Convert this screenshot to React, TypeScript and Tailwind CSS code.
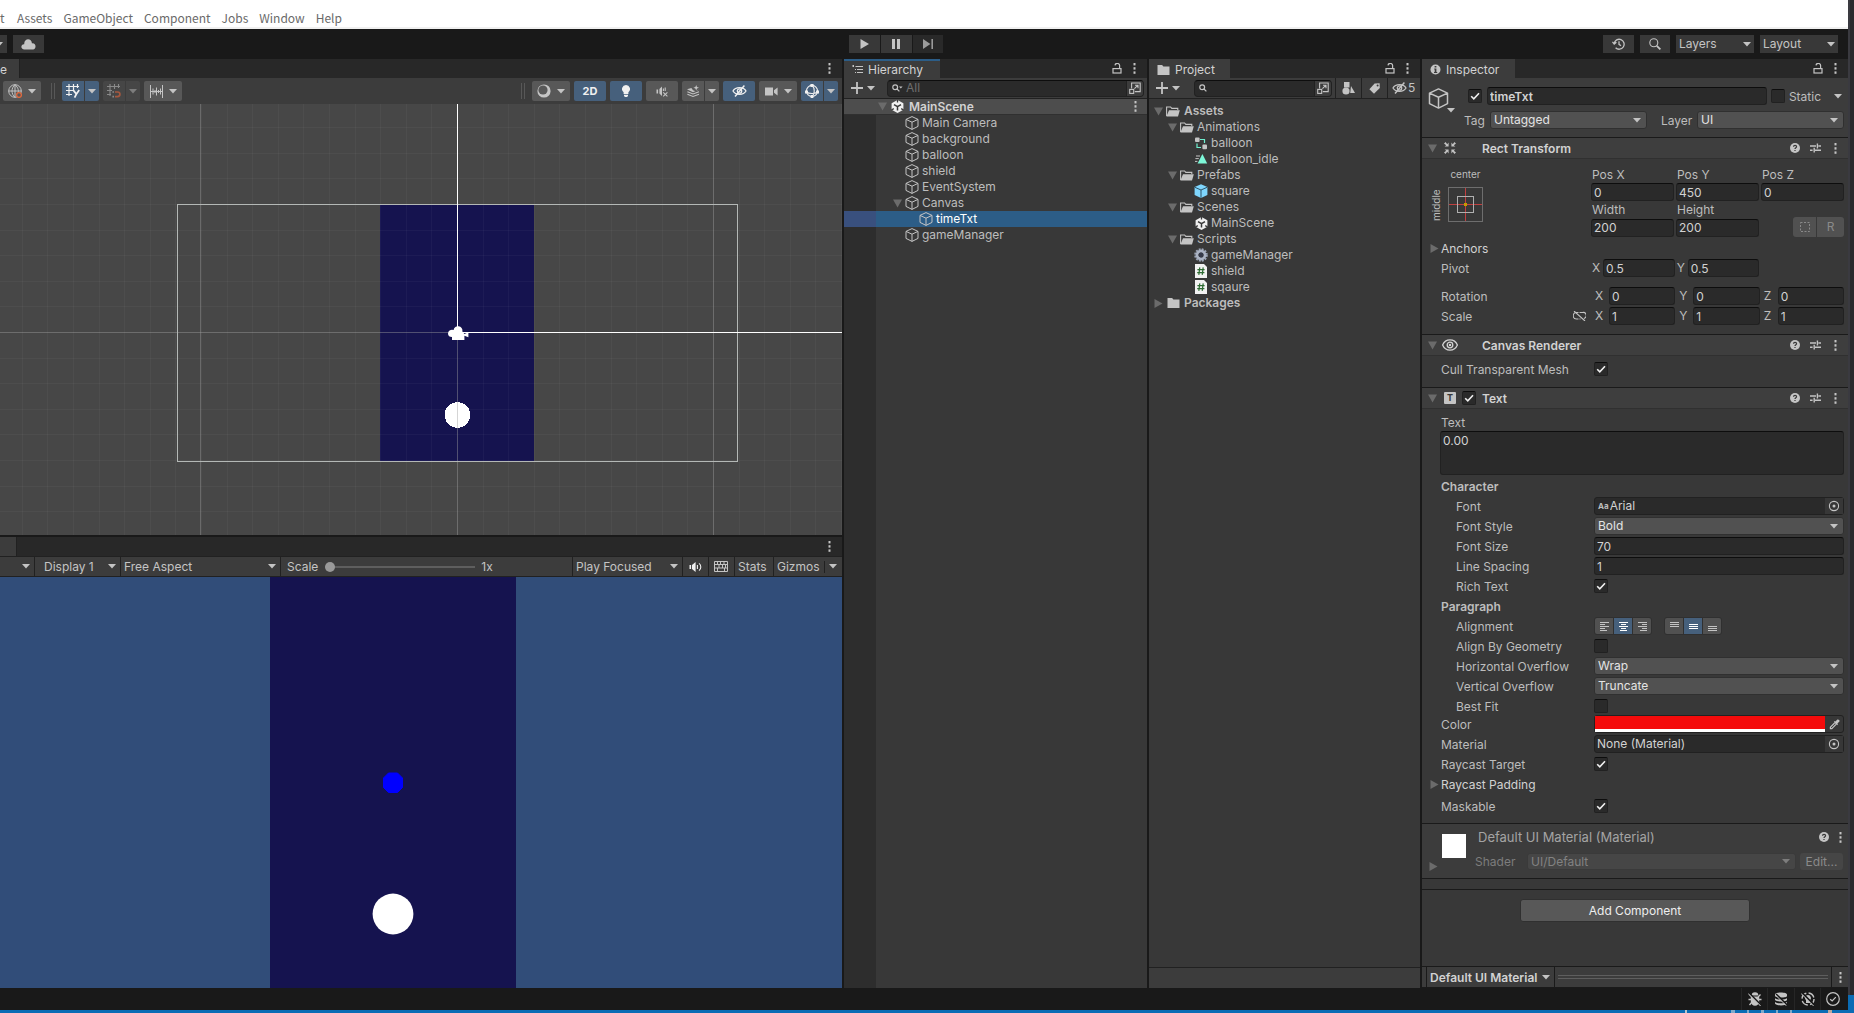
import { useId } from "react";
import type { ReactNode } from "react";

interface TreeItem {
  name: string;
  icon: ReactNode;
  depth: number;
  open?: boolean;
  closed?: boolean;
  bold?: boolean;
  selected?: boolean;
}

/* ── Small glyphs ── */

function Caret({ dim }: { dim?: boolean }) {
  return (
    <svg width="8" height="5" viewBox="0 0 8 5" className={dim ? "shrink-0 text-[#7d7d7d]" : "shrink-0 text-[#c4c4c4]"}>
      <path d="M0 0h8L4 4.6z" fill="currentColor" />
    </svg>
  );
}

function Foldout({ closed }: { closed?: boolean }) {
  return (
    <svg width="9" height="9" viewBox="0 0 9 9" className="shrink-0 text-[#6b6b6b]">
      <path d={closed ? "M0.5 0L8.5 4.5L0.5 9z" : "M0 0.5h9L4.5 8.5z"} fill="currentColor" />
    </svg>
  );
}

function Dots() {
  return (
    <svg width="3" height="11" viewBox="0 0 3 11" fill="#c4c4c4" className="shrink-0">
      <rect x="0.5" y="0" width="2" height="2.4" />
      <rect x="0.5" y="4.2" width="2" height="2.4" />
      <rect x="0.5" y="8.4" width="2" height="2.4" />
    </svg>
  );
}

function Lock() {
  return (
    <svg width="10" height="11" viewBox="0 0 10 11" fill="none" stroke="#c4c4c4" strokeWidth="1.2" className="shrink-0">
      <rect x="1" y="5.6" width="8" height="4.4" />
      <path d="M7.6 5.4V3a2.2 2.2 0 0 0-4.6-.6" />
    </svg>
  );
}

function Cube({ size = 14 }: { size?: number }) {
  return (
    <svg width={size} height={size} viewBox="0 0 14 14" fill="none" stroke="#c4c4c4" strokeLinejoin="round" className="shrink-0">
      <path d="M7 0.6L13 3.4V10.4L7 13.4L1 10.4V3.4z M1 3.4L7 6.2L13 3.4 M7 6.2V13.4" />
    </svg>
  );
}

function PrefabCube() {
  return (
    <svg width="14" height="14" viewBox="0 0 14 14" className="shrink-0">
      <path d="M7 0.2L13.4 3V11L7 13.9L0.6 11V3z" fill="#7fd6fd" />
      <path d="M0.9 3.3L7 6L13.1 3.3M7 6V13.8" fill="none" stroke="#2f5368" />
    </svg>
  );
}

function UnityMark() {
  return (
    <svg width="13" height="13" viewBox="0 0 13 13" className="shrink-0">
      <path d="M6.5 0L12.4 3.3V9.7L6.5 13L0.6 9.7V3.3z" fill="#f0f0f0" />
      <path d="M6.5 6.6V10.6M6.5 6.6L3 4.6M6.5 6.6L10 4.6" stroke="#383838" strokeWidth="1.5" />
      <path d="M6.5 0V2.6M0.4 10L2.8 8.6M12.6 10L10.2 8.6" stroke="#383838" strokeWidth="1.3" />
    </svg>
  );
}

function FolderOpen() {
  return (
    <svg width="14" height="11" viewBox="0 0 14 11" className="shrink-0">
      <path d="M0.6 10V1h4l1.2 1.4h6V4" fill="none" stroke="#c4c4c4" strokeWidth="1.1" />
      <path d="M3 4.2h10.8L12 10.6H0.4z" fill="#c4c4c4" />
    </svg>
  );
}

function Folder() {
  return (
    <svg width="13" height="10" viewBox="0 0 13 10" className="shrink-0">
      <path d="M0.5 0h4.6l1.3 1.6H12.5V10H0.5z" fill="#c4c4c4" />
    </svg>
  );
}

function AnimatorIcon() {
  return (
    <svg width="14" height="13" viewBox="0 0 14 13" className="shrink-0">
      <path d="M6 2.5h4.5V6M3 6.5V10.5h4" fill="none" stroke="#6ff0d0" strokeWidth="1.2" />
      <rect x="1" y="0.5" width="4.6" height="4.6" rx="1" fill="#c4c4c4" />
      <rect x="8.4" y="7.6" width="4.6" height="4.6" rx="1" fill="#c4c4c4" />
    </svg>
  );
}

function ClipIcon() {
  return (
    <svg width="14" height="10" viewBox="0 0 14 10" className="shrink-0">
      <path d="M8.4 0L13.2 9.4H3.6z" fill="#7df7d8" />
      <path d="M2 2h4M1.4 4.6h3.4M1 7.4h2.4" stroke="#c4c4c4" />
    </svg>
  );
}

function GearIcon() {
  return (
    <svg width="14" height="14" viewBox="0 0 14 14" className="shrink-0">
      <circle cx="7" cy="7" r="5.8" fill="none" stroke="#9aa3b4" strokeWidth="2" strokeDasharray="1.9 1.14" />
      <circle cx="7" cy="7" r="4" fill="none" stroke="#aab3c4" strokeWidth="2.8" />
      <circle cx="7" cy="7" r="2.4" fill="#353a4a" />
    </svg>
  );
}

function ScriptIcon() {
  return (
    <svg width="14" height="14" viewBox="0 0 14 14" className="shrink-0">
      <path d="M1 0h9l3 3v11H1z" fill="#f2f2f2" />
      <path d="M5.8 3.4L4.8 10.8M9.2 3.4L8.2 10.8M3.4 5.6h7.2M3.2 8.6h7.2" stroke="#2d6b32" strokeWidth="1.2" />
    </svg>
  );
}

function SearchGlyph({ menu }: { menu?: boolean }) {
  return (
    <svg width="11" height="8" viewBox="0 0 11 8" fill="none" stroke="#c4c4c4" strokeWidth="1.2" className="shrink-0">
      <circle cx="3.2" cy="3.2" r="2.4" />
      <path d="M5 5L7.4 7.4" />
      {menu && <path d="M7 2.4h3.6L8.8 4.4z" fill="#c4c4c4" stroke="none" />}
    </svg>
  );
}

function PopOut() {
  return (
    <svg width="12" height="12" viewBox="0 0 12 12" fill="none" stroke="#c4c4c4" strokeWidth="1.1" className="shrink-0">
      <path d="M2.6 6.4V1h8.6v8.6H5.8M5.4 6.6L8.8 3.4M6 3.2h3v3" />
      <rect x="0.7" y="7.4" width="4" height="4" />
    </svg>
  );
}

function HelpIcon() {
  return (
    <svg width="10" height="10" viewBox="0 0 10 10" className="shrink-0">
      <circle cx="5" cy="5" r="5" fill="#c4c4c4" />
      <path d="M3.5 3.8C3.5 2 6.6 2 6.6 3.8C6.6 4.8 5 4.8 5 6M5 7v1.1" fill="none" stroke="#383838" strokeWidth="1.2" />
    </svg>
  );
}

function PresetIcon() {
  return (
    <svg width="11" height="10" viewBox="0 0 11 10" stroke="#c4c4c4" strokeWidth="1.4" className="shrink-0">
      <path d="M0 3h6M8.4 3H11M7.4 0.6v4.8M0 7.2h2.6M5 7.2h6M4.2 4.8v4.8" />
    </svg>
  );
}

function EyeOff() {
  return (
    <svg width="15" height="12" viewBox="0 0 15 12" fill="none" stroke="currentColor" strokeWidth="1.3" className="shrink-0">
      <path d="M1 6C3.5 1.6 11.5 1.6 14 6C11.5 10.4 3.5 10.4 1 6z" />
      <circle cx="7.5" cy="6" r="2.2" />
      <path d="M12.4 0.6L3 11.4" strokeWidth="1.5" />
    </svg>
  );
}

function Target() {
  return (
    <svg width="12" height="12" viewBox="0 0 12 12" className="shrink-0">
      <circle cx="6" cy="6" r="4.6" fill="none" stroke="#c4c4c4" strokeWidth="1.1" />
      <circle cx="6" cy="6" r="1.5" fill="#c4c4c4" />
    </svg>
  );
}

/* ── Form controls ── */

const inputClass =
  "h-[18px] w-full min-w-0 rounded-[3px] border border-[#212121] border-t-[#0d0d0d] bg-[#2a2a2a] px-[2px] text-[#d2d2d2] outline-none";

function TextField({ label, value, bold }: { label: string; value: string; bold?: boolean }) {
  return <input aria-label={label} defaultValue={value} className={bold ? `${inputClass} font-semibold` : inputClass} />;
}

function Check({ id, label, checked }: { id?: string; label?: string; checked?: boolean }) {
  return (
    <span className="relative flex size-[14px] shrink-0">
      <input
        id={id}
        type="checkbox"
        aria-label={label}
        defaultChecked={checked}
        className="peer size-[14px] appearance-none rounded-[2px] border border-[#212121] border-t-[#0d0d0d] bg-[#2a2a2a]"
      />
      <svg
        viewBox="0 0 14 14"
        className="pointer-events-none absolute inset-0 hidden size-[14px] peer-checked:block"
        fill="none"
        stroke="#f0f0f0"
        strokeWidth="1.6"
      >
        <path d="M3.2 7.2L5.8 9.8L11 4.2" />
      </svg>
    </span>
  );
}

function Dropdown({ id, label, value, disabled }: { id?: string; label?: string; value: string; disabled?: boolean }) {
  return (
    <span className="relative flex w-full min-w-0 items-center">
      <select
        id={id}
        aria-label={label}
        disabled={disabled}
        className={
          disabled
            ? "h-[17px] w-full appearance-none rounded-[3px] border border-[#3a3a3a] bg-[#464646] px-[3px] leading-[14px] text-[#828282] opacity-100"
            : "h-[18px] w-full appearance-none rounded-[3px] border border-[#303030] bg-[#515151] px-[3px] leading-[14px] text-[#e4e4e4]"
        }
      >
        <option>{value}</option>
      </select>
      <span className="pointer-events-none absolute right-[6px]">
        <Caret dim={disabled} />
      </span>
    </span>
  );
}

function Row({
  label,
  indent,
  className = "h-5",
  children,
}: {
  label: string;
  indent?: boolean;
  className?: string;
  children: (id: string) => ReactNode;
}) {
  const id = useId();
  return (
    <div className={`grid grid-cols-[153px_1fr] items-center pr-1 pl-[19px] ${className}`}>
      <label htmlFor={id} className={indent ? "pt-[2px] pl-[15px]" : "pt-[2px]"}>
        {label}
      </label>
      <div className="flex min-w-0 items-center">{children(id)}</div>
    </div>
  );
}

/* ── Panel chrome ── */

function TabBar({ title, icon, active, width }: { title: string; icon: ReactNode; active?: boolean; width: string }) {
  return (
    <div className="flex h-[19px] shrink-0 justify-between bg-[#282828]">
      <div className={`flex items-center gap-[5px] border-t-2 bg-[#3c3c3c] pl-2 ${active ? "border-[#2c5d87]" : "border-[#3c3c3c]"} ${width}`}>
        {icon}
        <span className="text-[#d2d2d2]">{title}</span>
      </div>
      <div className="flex items-center gap-[11px] pr-[11px]">
        <button aria-label="Lock"><Lock /></button>
        <button aria-label={`${title} menu`}><Dots /></button>
      </div>
    </div>
  );
}

function SearchBox({ placeholder, menu }: { placeholder?: string; menu?: boolean }) {
  return (
    <div className="flex h-[17px] min-w-0 flex-1 items-center overflow-hidden rounded-[4px] border border-[#212121] border-t-[#0d0d0d] bg-[#2a2a2a] pl-1">
      <SearchGlyph menu={menu} />
      <input
        aria-label="Search"
        placeholder={placeholder}
        className="ml-[3px] h-[15px] min-w-0 flex-1 bg-transparent text-[#d2d2d2] outline-none placeholder:text-[#6e6e6e]"
      />
      <button aria-label="Open search" className="flex h-[15px] w-[17px] items-center justify-center border-l border-[#212121] bg-[#3c3c3c]">
        <PopOut />
      </button>
    </div>
  );
}

function AddMenu() {
  return (
    <button aria-label="Add" className="flex items-center gap-1">
      <svg width="12" height="12" viewBox="0 0 12 12" stroke="#c4c4c4" strokeWidth="1.8">
        <path d="M6 0v12M0 6h12" />
      </svg>
      <Caret />
    </button>
  );
}

/* ── Top bars ── */

const menus = ["Assets", "GameObject", "Component", "Jobs", "Window", "Help"];

function MenuBar() {
  return (
    <nav className="flex h-[29px] shrink-0 items-center gap-[11px] border-b-2 border-[#f0f0f0] bg-white pt-[9px] font-['Noto_Sans_CJK_KR','Open_Sans',sans-serif] text-[12px] leading-[16px] text-[#6a6a6a]">
      <button className="w-[6px] text-left">t</button>
      {menus.map((m) => (
        <button key={m}>{m}</button>
      ))}
    </nav>
  );
}

function MainToolbar() {
  return (
    <div className="grid h-[30px] shrink-0 grid-cols-[1fr_94px_905px] items-center bg-[#191919]">
      <div className="flex gap-[6px]">
        <button aria-label="Account" className="flex h-[18px] w-[7px] items-center justify-end overflow-hidden bg-[#383838] pr-1">
          <Caret />
        </button>
        <button aria-label="Cloud" className="flex h-[18px] w-[31px] items-center justify-center bg-[#383838]">
          <svg width="15" height="11" viewBox="0 0 15 11">
            <path d="M3.4 10.6C-0.8 10.4-0.4 5 3.2 5.2C3 -0.8 10.4-1.4 11 4.4C15.4 3.8 15.6 10.2 12 10.6z" fill="#c4c4c4" />
          </svg>
        </button>
      </div>
      <div className="flex gap-px">
        <button aria-label="Play" className="flex h-[18px] w-[31px] items-center justify-center bg-[#383838]">
          <svg width="9" height="10" viewBox="0 0 9 10"><path d="M0.5 0L9 5L0.5 10z" fill="#c4c4c4" /></svg>
        </button>
        <button aria-label="Pause" className="flex h-[18px] w-[31px] items-center justify-center bg-[#383838]">
          <svg width="9" height="10" viewBox="0 0 9 10"><path d="M0 0h3v10H0zM5 0h3v10H5z" fill="#c4c4c4" /></svg>
        </button>
        <button aria-label="Step" className="flex h-[18px] w-[30px] items-center justify-center bg-[#292929]">
          <svg width="10" height="10" viewBox="0 0 10 10"><path d="M0 0L7.4 5L0 10zM8.4 0H10v10H8.4z" fill="#9a9a9a" /></svg>
        </button>
      </div>
      <div className="flex justify-end gap-[6px] pr-[10px]">
        <button aria-label="History" className="flex h-[18px] w-[31px] items-center justify-center bg-[#383838]">
          <svg width="13" height="12" viewBox="0 0 13 12" fill="none" stroke="#c4c4c4" strokeWidth="1.3">
            <path d="M2.2 5.4A5 5 0 1 1 3.6 9.8M0.4 3.8L2.2 6L4.4 4.2M7 3.2V6.4L9 7.8" />
          </svg>
        </button>
        <button aria-label="Find" className="flex h-[18px] w-[30px] items-center justify-center bg-[#383838]">
          <svg width="12" height="12" viewBox="0 0 12 12" fill="none" stroke="#c4c4c4">
            <circle cx="4.8" cy="4.8" r="4" strokeWidth="1.1" />
            <path d="M7.8 7.8L11.4 11.4" strokeWidth="1.8" />
          </svg>
        </button>
        {["Layers", "Layout"].map((name) => (
          <button key={name} className="flex h-[18px] w-[78px] items-center justify-between bg-[#383838] px-[3px] text-[#c4c4c4]">
            {name}
            <Caret />
          </button>
        ))}
      </div>
    </div>
  );
}

/* ── Scene view ── */

function Grip() {
  return <span className="h-4 w-1 border-x border-[#585858]" />;
}

const toolTones = {
  normal: "bg-[#585858] text-[#c4c4c4]",
  active: "bg-[#46607c] text-[#f0f0f0]",
  off: "bg-[#464646] text-[#8a8a8a]",
};

function Tool({ label, tone = "normal", width = "w-8", caret, children }: { label: string; tone?: keyof typeof toolTones; width?: string; caret?: boolean; children: ReactNode }) {
  return (
    <button aria-label={label} className={`flex h-5 items-center justify-center rounded-[2px] ${caret ? "gap-[6px]" : ""} ${toolTones[tone]} ${width}`}>
      {children}
      {caret && <Caret />}
    </button>
  );
}

function SplitTool({ label, tone = "normal", children }: { label: string; tone?: keyof typeof toolTones; children: ReactNode }) {
  return (
    <div className="flex gap-px">
      <button aria-label={label} className={`flex h-5 w-[22px] items-center justify-center rounded-l-[2px] ${toolTones[tone]}`}>
        {children}
      </button>
      <button aria-label={`${label} options`} className={`flex h-5 w-[14px] items-center justify-center rounded-r-[2px] ${toolTones[tone]}`}>
        <Caret dim={tone === "off"} />
      </button>
    </div>
  );
}

function SceneToolbar() {
  return (
    <div className="flex h-[26px] shrink-0 items-center justify-between bg-[#3c3c3c] pr-1 pl-[3px]">
      <div className="flex items-center gap-1">
        <Tool label="Pivot orientation" width="w-[38px]" caret>
          <svg width="14" height="14" viewBox="0 0 14 14" fill="none" stroke="#c4c4c4">
            <circle cx="7" cy="7" r="6.3" />
            <path d="M0.7 7h12.6M7 0.7v12.6M7 0.7C3 4 3 10 7 13.3M7 0.7C10.6 4 10.8 7 10 9" />
            <circle cx="11" cy="11" r="2.4" fill="#585858" stroke="#e2683c" strokeWidth="1.3" />
          </svg>
        </Tool>
        <span className="mr-[3px] ml-[6px] flex"><Grip /></span>
        <SplitTool label="Grid axis" tone="active">
          <svg width="14" height="14" viewBox="0 0 14 14" fill="none" stroke="currentColor" strokeWidth="1.2">
            <path d="M3 0v12M7.5 0v7M11.5 0v4M0 2.5h13M0 6.5h7M0 10.5h6" />
            <path d="M7.6 6.6L10.4 10L13.2 6M10.4 10L8.6 13.6" strokeWidth="1.7" />
          </svg>
        </SplitTool>
        <SplitTool label="Grid snapping" tone="off">
          <svg width="14" height="14" viewBox="0 0 14 14" fill="none" stroke="currentColor" strokeWidth="1.1">
            <path d="M3 0v12M7.5 0v5M11.5 0v4M0 2.5h13M0 6.5h5M0 10.5h4" />
            <path d="M8 8h2.6a2.2 2.2 0 0 1 0 4.6H8" stroke="#a6583f" strokeWidth="1.7" />
            <path d="M5.4 8H7M5.4 12.6H7" strokeWidth="1.7" />
          </svg>
        </SplitTool>
        <Tool label="Snap increment" width="w-[38px]" caret>
          <svg width="13" height="13" viewBox="0 0 13 13" fill="none" stroke="currentColor">
            <path d="M0.5 0v13M12.5 0v13M3 3.5v6M5 5v3M6.5 2.5v8M8.5 5v3M10.5 3.5v6M1 6.5h11" />
          </svg>
        </Tool>
      </div>
      <div className="flex items-center gap-1">
        <span className="mr-[3px] flex"><Grip /></span>
        <Tool label="Draw mode" width="w-[38px]" caret>
          <svg width="14" height="14" viewBox="0 0 14 14">
            <circle cx="7" cy="7" r="6.6" fill="#c4c4c4" />
            <circle cx="6" cy="6" r="4.6" fill="#585858" />
          </svg>
        </Tool>
        <Tool label="2D" tone="active"><span className="text-[11px] font-bold">2D</span></Tool>
        <Tool label="Lighting" tone="active">
          <svg width="8" height="12" viewBox="0 0 8 12" fill="currentColor">
            <path d="M4 0a4 4 0 0 1 2.4 7.2V9H1.6V7.2A4 4 0 0 1 4 0zM2 9.8h4V11L5 12H3L2 11z" />
          </svg>
        </Tool>
        <Tool label="Audio">
          <svg width="12" height="11" viewBox="0 0 12 11" fill="none" stroke="currentColor" strokeWidth="1.1">
            <path d="M0.5 3.4h1.6v4H0.5z M3.4 3L6 0.6V10L3.4 7.6z" fill="currentColor" stroke="none" />
            <path d="M7.4 2.4V5M9.2 1.6V5M7.2 6.4l4.2 4M11.4 6.4l-4.2 4" />
          </svg>
        </Tool>
        <SplitTool label="Effects">
          <svg width="13" height="12" viewBox="0 0 13 12" fill="currentColor">
            <path d="M0 4.2L4.4 3l1.6 2.2L8 6l2.6-.4L12 4.6 6 7.2z" />
            <path d="M0.4 6.8L6 9l6-2.2M0.4 9.2L6 11.4l6-2.2" fill="none" stroke="currentColor" strokeWidth="1.1" />
            <path d="M9.2 0l.8 1.9 2 .8-2 .8-.8 1.9-.8-1.9-2-.8 2-.8z" />
          </svg>
        </SplitTool>
        <Tool label="Scene visibility" tone="active"><EyeOff /></Tool>
        <Tool label="Camera" width="w-[38px]" caret>
          <svg width="13" height="9" viewBox="0 0 13 9" fill="currentColor">
            <path d="M0 0.5h8v8H0zM9 3.2L12.6 0.4V8.6L9 5.8z" />
          </svg>
        </Tool>
        <SplitTool label="Gizmos" tone="active">
          <svg width="14" height="14" viewBox="0 0 14 14" fill="none" stroke="currentColor" strokeWidth="1.1">
            <circle cx="7" cy="7" r="5.6" />
            <path d="M7 1.4C10 4 10 10 7 12.6M1.4 8C4 10 10 10 12.6 8" />
            <path d="M5.400 0h3.200v3H5.400zM0 6.600h3v3H0zM11 6.600h3v3h-3zM5.600 11h2.800v3H5.600z" fill="currentColor" stroke="none" />
          </svg>
        </SplitTool>
      </div>
    </div>
  );
}

const gridX = Array.from({ length: 34 }, (_, i) => Math.floor(457.5 + (i - 18) * 25.6));
const gridY = Array.from({ length: 17 }, (_, i) => Math.floor(228.5 + (i - 8) * 25.6));

function SceneCanvas() {
  return (
    <svg viewBox="0 0 842 431" preserveAspectRatio="xMidYMid slice" className="block h-full w-full bg-[#474747]" shapeRendering="crispEdges">
      <rect x="380" y="100" width="154" height="257" fill="#15134f" />
      <g fill="#ffffff" fillOpacity="0.035">
        {gridX.map((x) => <rect key={x} x={x} y="0" width="1" height="431" />)}
        {gridY.map((y) => <rect key={y} x="0" y={y} width="842" height="1" />)}
      </g>
      <circle cx="457.5" cy="311" r="12.8" fill="#ffffff" />
      <g fill="#9a9a9a" fillOpacity="0.42">
        <rect x="200" y="0" width="1" height="431" />
        <rect x="713" y="0" width="1" height="431" />
        <rect x="457" y="228" width="1" height="203" />
        <rect x="0" y="228" width="457" height="1" />
      </g>
      <rect x="177.5" y="100.5" width="560" height="257" fill="none" stroke="#b4b8b6" />
      <rect x="457" y="0" width="1" height="228" fill="#ffffff" />
      <rect x="457" y="228" width="385" height="1" fill="#ffffff" />
      <g shapeRendering="auto">
        <path d="M453 228.6l3-3 6 1-2 4z" fill="#0000ff" />
        <path d="M448 229.4a4 4 0 0 1 5.6-3.4A4.3 4.3 0 1 1 462.4 227.4L464.4 230l4-1.8v5l-4-1.4V236H452v-3C449.6 233 448 231.6 448 229.4z" fill="#ffffff" />
      </g>
    </svg>
  );
}

/* ── Game view ── */

function GameToolbar() {
  return (
    <div className="flex h-[21px] shrink-0 items-stretch border-y border-[#212121] bg-[#3c3c3c] text-[#c4c4c4]">
      <button aria-label="View" className="flex w-[34px] items-center justify-end pr-1"><Caret /></button>
      <button className="flex w-[86px] items-center justify-between border-l border-[#212121] pr-1 pl-[9px]">Display 1<Caret /></button>
      <button className="flex w-[160px] items-center justify-between border-l border-[#212121] pr-1 pl-[3px]">Free Aspect<Caret /></button>
      <label className="flex flex-1 items-center border-l border-[#212121] pl-[6px]">
        Scale
        <input
          type="range"
          defaultValue={0}
          className="mr-[6px] ml-[7px] h-[2px] w-[150px] appearance-none bg-[#5e5e5e] [&::-webkit-slider-thumb]:size-[10px] [&::-webkit-slider-thumb]:appearance-none [&::-webkit-slider-thumb]:rounded-full [&::-webkit-slider-thumb]:bg-[#999999]"
        />
        1x
      </label>
      <button className="flex w-[110px] items-center justify-between border-l border-[#212121] pr-1 pl-[3px]">Play Focused<Caret /></button>
      <button aria-label="Mute audio" className="flex w-[26px] items-center justify-center border-l border-[#212121]">
        <svg width="13" height="10" viewBox="0 0 13 10" fill="none" stroke="#f0f0f0" strokeWidth="1.1">
          <path d="M0.5 3h1.6v4H0.5z M3 3L6.6 0V10L3 7z" fill="#f0f0f0" stroke="none" />
          <path d="M8.4 3v4M10 1.4C12.4 3 12.4 7 10 8.6" />
        </svg>
      </button>
      <button aria-label="Shortcuts" className="flex w-[26px] items-center border-l border-[#212121] pl-[5px]">
        <svg width="14" height="11" viewBox="0 0 14 11" fill="none" stroke="#c4c4c4">
          <path d="M0.5 0.5h13v10H0.5zM0.5 3.5h13M0.5 7h13M3.5 0.5v3M6.5 0.5v3M10 0.5v3M5 3.5v3.5M8.5 3.5v3.5M11.5 3.5v3.5M3.5 7v3.5M10.5 7v3.5" />
        </svg>
      </button>
      <button className="flex w-[39px] items-center border-l border-[#212121] pl-[3px]">Stats</button>
      <button className="flex w-[51px] items-center border-l border-[#212121] pl-[3px]">Gizmos</button>
      <button aria-label="Gizmos options" className="flex w-[18px] items-center justify-between pr-[5px]">
        <span className="h-3 w-px bg-[#212121]" />
        <Caret />
      </button>
    </div>
  );
}

function GameCanvas() {
  return (
    <svg viewBox="0 0 842 411" preserveAspectRatio="xMidYMid slice" className="block h-full w-full bg-[#314d79]">
      <rect x="270" y="0" width="246" height="411" fill="#15134f" />
      <path d="M388.5 196h9l5 5v9.5l-5 5h-9l-5-5V201z" fill="#0000ff" stroke="#0000ff" strokeLinejoin="round" />
      <circle cx="393" cy="337" r="20.4" fill="#ffffff" />
    </svg>
  );
}

/* ── Hierarchy ── */

const hierarchy: TreeItem[] = [
  { name: "Main Camera", icon: <Cube />, depth: 1 },
  { name: "background", icon: <Cube />, depth: 1 },
  { name: "balloon", icon: <Cube />, depth: 1 },
  { name: "shield", icon: <Cube />, depth: 1 },
  { name: "EventSystem", icon: <Cube />, depth: 1 },
  { name: "Canvas", icon: <Cube />, depth: 1, open: true },
  { name: "timeTxt", icon: <Cube />, depth: 2, selected: true },
  { name: "gameManager", icon: <Cube />, depth: 1 },
];

const indents = ["pl-[5px]", "pl-[19px]", "pl-[33px]"];

function TreeRow({ item }: { item: TreeItem }) {
  return (
    <div className={`flex h-4 items-center gap-[3px] ${indents[item.depth]}`}>
      <span className="flex w-[9px] justify-center">
        {(item.open || item.closed) && <Foldout closed={item.closed} />}
      </span>
      <span className="flex w-[14px] justify-center">{item.icon}</span>
      <span className={item.bold ? "pl-px font-semibold" : ""}>{item.name}</span>
    </div>
  );
}

function Hierarchy() {
  return (
    <section className="flex w-[303px] shrink-0 flex-col bg-[#383838]">
      <TabBar
        title="Hierarchy"
        active
        width="w-24"
        icon={
          <svg width="11" height="9" viewBox="0 0 11 9" stroke="#c4c4c4" className="shrink-0">
            <path d="M0 1h2M3.5 1.5H11M3 4.5h1M5 4.5h6M3 7.5h1M5 7.5h6M1.5 0v2" />
          </svg>
        }
      />
      <div className="flex h-[21px] shrink-0 items-center gap-3 border-b border-[#212121] bg-[#3c3c3c] pr-[3px] pl-[7px]">
        <AddMenu />
        <SearchBox placeholder="All" menu />
      </div>
      <div className="flex h-4 items-center gap-1 border-b border-[#303030] bg-[#4d4d4d] pr-[10px] pl-[34px]">
        <Foldout />
        <UnityMark />
        <span className="flex-1 pl-px font-semibold text-[#d2d2d2]">MainScene</span>
        <Dots />
      </div>
      <div className="flex flex-1 flex-col">
        {hierarchy.map((item) => (
          <div key={item.name} className={item.selected ? "flex bg-[#2c5d87] text-white" : "flex"}>
            <span className={item.selected ? "w-[30px] bg-[#39507e]" : "w-[30px] bg-[#2d2d2d]"} />
            <span className={item.selected ? "w-[2px] bg-[#39507e]" : "w-[2px] bg-[#2d2d2d]"} />
            <div className="-ml-[2px]">
              <TreeRow item={item} />
            </div>
          </div>
        ))}
        <span className="w-8 flex-1 bg-[#2d2d2d]" />
      </div>
    </section>
  );
}

/* ── Project ── */

const project: TreeItem[] = [
  { name: "Assets", icon: <FolderOpen />, depth: 0, open: true, bold: true },
  { name: "Animations", icon: <FolderOpen />, depth: 1, open: true },
  { name: "balloon", icon: <AnimatorIcon />, depth: 2 },
  { name: "balloon_idle", icon: <ClipIcon />, depth: 2 },
  { name: "Prefabs", icon: <FolderOpen />, depth: 1, open: true },
  { name: "square", icon: <PrefabCube />, depth: 2 },
  { name: "Scenes", icon: <FolderOpen />, depth: 1, open: true },
  { name: "MainScene", icon: <UnityMark />, depth: 2 },
  { name: "Scripts", icon: <FolderOpen />, depth: 1, open: true },
  { name: "gameManager", icon: <GearIcon />, depth: 2 },
  { name: "shield", icon: <ScriptIcon />, depth: 2 },
  { name: "sqaure", icon: <ScriptIcon />, depth: 2 },
  { name: "Packages", icon: <Folder />, depth: 0, closed: true, bold: true },
];

function Project() {
  return (
    <section className="flex w-[271px] shrink-0 flex-col bg-[#383838]">
      <TabBar title="Project" width="w-[81px]" icon={<Folder />} />
      <div className="flex h-[21px] shrink-0 items-center border-b border-[#212121] bg-[#3c3c3c] pl-[7px]">
        <AddMenu />
        <div className="mr-[3px] ml-[14px] flex min-w-0 flex-1">
          <SearchBox />
        </div>
        <button aria-label="Filter by type" className="flex h-full w-[26px] items-center justify-center border-l border-[#212121]">
          <svg width="13" height="13" viewBox="0 0 13 13" fill="#c4c4c4">
            <rect x="2" y="0" width="5.5" height="5.5" />
            <circle cx="4" cy="9" r="3.6" />
            <path d="M9 4l4 7H8.2z" />
          </svg>
        </button>
        <button aria-label="Filter by label" className="flex h-full w-[26px] items-center justify-center border-l border-[#212121]">
          <svg width="11" height="11" viewBox="0 0 11 11">
            <path d="M5.6 0.6L10.6 0.2L10.8 5L5 10.8L0.4 6.2z" fill="#c4c4c4" />
            <circle cx="8.6" cy="2.6" r="1" fill="#3c3c3c" />
          </svg>
        </button>
        <button className="flex h-full w-[33px] items-center gap-px border-l border-[#212121] pl-1 text-[#c4c4c4]">
          <EyeOff />5
        </button>
      </div>
      <div className="flex flex-1 flex-col pt-1">
        {project.map((item, i) => (
          <TreeRow key={i} item={item} />
        ))}
      </div>
      <div className="h-[21px] border-t border-[#212121] bg-[#3c3c3c]" />
    </section>
  );
}

/* ── Inspector ── */

function ComponentHeader({ title, icon, toggle }: { title: string; icon: ReactNode; toggle?: boolean }) {
  return (
    <div className="flex h-[22px] items-center border-t border-b border-t-[#1a1a1a] border-b-[#303030] bg-[#3e3e3e] pr-[11px] pl-[6px]">
      <Foldout />
      <span className="ml-[5px] flex w-4 justify-center">{icon}</span>
      <span className="flex w-6 pl-1">{toggle && <Check label={`${title} enabled`} checked />}</span>
      <h2 className="flex-1 pt-[2px] font-semibold text-[#d2d2d2]">{title}</h2>
      <div className="flex items-center gap-[10px]">
        <HelpIcon />
        <PresetIcon />
        <span className="ml-[3px]"><Dots /></span>
      </div>
    </div>
  );
}

function Axis({ name, of, value, width }: { name: string; of: string; value: string; width: string }) {
  return (
    <label className="flex items-center">
      <span className={`shrink-0 ${width}`}>{name}</span>
      <TextField label={`${of} ${name}`} value={value} />
    </label>
  );
}

function ObjectHeader() {
  return (
    <div className="flex h-[59px] shrink-0 bg-[#3c3c3c] pr-1 pl-[6px]">
      <button aria-label="Icon" className="flex h-[35px] w-7 items-end pt-[10px]">
        <span className="-mr-[2px] pb-1"><Cube size={21} /></span>
        <Caret />
      </button>
      <div className="flex flex-1 flex-col gap-[6px] pt-[9px]">
        <div className="flex items-center pl-3">
          <Check label="Active" checked />
          <div className="mr-1 ml-[5px] flex flex-1"><TextField label="Name" value="timeTxt" bold /></div>
          <label className="flex items-center gap-1">
            <Check />
            <span className="pt-[2px]">Static</span>
          </label>
          <span className="mr-[2px] ml-[13px]"><Caret /></span>
        </div>
        <div className="flex items-center">
          <label htmlFor="tag" className="w-[34px] pt-[2px] pl-2">Tag</label>
          <div className="flex flex-157"><Dropdown id="tag" value="Untagged" /></div>
          <label htmlFor="layer" className="w-[50px] pt-[2px] pl-[14px]">Layer</label>
          <div className="flex flex-147"><Dropdown id="layer" value="UI" /></div>
        </div>
      </div>
    </div>
  );
}

const posFields = [
  { name: "Pos X", value: "0" },
  { name: "Pos Y", value: "450" },
  { name: "Pos Z", value: "0" },
];

const sizeFields = [
  { name: "Width", value: "200" },
  { name: "Height", value: "200" },
];

function RectTransform() {
  return (
    <div className="pb-2">
      <div className="flex pt-2 pr-1 pb-px">
        <div className="flex w-[169px] pl-2">
          <span className="mt-5 h-9 rotate-180 text-center text-[10px] leading-[12px] [writing-mode:vertical-rl]">middle</span>
          <div className="ml-1 flex w-[38px] flex-col items-center pl-px">
            <span className="h-5 text-[10px] leading-[14px]">center</span>
            <svg width="35" height="35" viewBox="0 0 35 35" fill="none" shapeRendering="crispEdges">
              <path d="M17.5 1v33M1 17.5h33" stroke="#c04040" />
              <rect x="0.5" y="0.5" width="34" height="34" stroke="#6e6e6e" />
              <rect x="9.5" y="9.5" width="16" height="16" stroke="#b0b0b0" />
              <rect x="16" y="16" width="3" height="3" fill="#c49a00" />
            </svg>
          </div>
        </div>
        <div className="grid flex-1 grid-cols-3 gap-x-[2px]">
          {posFields.map((f) => (
            <label key={f.name} className="flex flex-col leading-[16px]">
              <span className="pl-px">{f.name}</span>
              <TextField label={f.name} value={f.value} />
            </label>
          ))}
          {sizeFields.map((f) => (
            <label key={f.name} className="flex flex-col leading-[18px]">
              <span className="pl-px">{f.name}</span>
              <TextField label={f.name} value={f.value} />
            </label>
          ))}
          <div className="flex items-end justify-end gap-px text-[#8a8a8a]">
            <button aria-label="Blueprint mode" className="flex h-5 w-[23px] items-center justify-center rounded-l-[3px] bg-[#515151]">
              <svg width="10" height="10" viewBox="0 0 10 10"><rect x="0.5" y="0.5" width="9" height="9" fill="none" stroke="#8a8a8a" strokeDasharray="2 1.5" /></svg>
            </button>
            <button aria-label="Raw edit mode" className="h-5 w-[27px] rounded-r-[3px] bg-[#515151]">R</button>
          </div>
        </div>
      </div>
      <div className="flex h-5 items-center gap-[2px] pl-2 text-[#d2d2d2]">
        <Foldout closed />
        <span className="pt-[2px]">Anchors</span>
      </div>
      <div className="mb-2 grid h-5 grid-cols-[150px_1fr] items-center pr-1 pl-[19px]">
        <span className="pt-[2px]">Pivot</span>
        <div className="grid grid-cols-3 gap-x-[2px] pl-px">
          <Axis of="Pivot" name="X" value="0.5" width="w-[11px]" />
          <Axis of="Pivot" name="Y" value="0.5" width="w-[11px]" />
        </div>
      </div>
      <div className="grid h-5 grid-cols-[150px_1fr] items-center pr-1 pl-[19px]">
        <span className="pt-[2px]">Rotation</span>
        <div className="grid grid-cols-3 gap-x-1 pl-1">
          <Axis of="Rotation" name="X" value="0" width="w-[14px]" />
          <Axis of="Rotation" name="Y" value="0" width="w-[14px]" />
          <Axis of="Rotation" name="Z" value="0" width="w-[14px]" />
        </div>
      </div>
      <div className="grid h-5 grid-cols-[150px_1fr] items-center pr-1 pl-[19px]">
        <span className="flex items-center justify-between pr-[5px]">
          <span className="pt-[2px]">Scale</span>
          <svg width="13" height="10" viewBox="0 0 13 10" fill="none" stroke="#c4c4c4" strokeWidth="1.1">
            <path d="M5.5 1.5h-2a3 3 0 0 0 0 6.5h2M6.5 1.5h3a3 3 0 0 1 1.400 6M7.500 8h-1M1 0l11 10" />
          </svg>
        </span>
        <div className="grid grid-cols-3 gap-x-1 pl-1">
          <Axis of="Scale" name="X" value="1" width="w-[14px]" />
          <Axis of="Scale" name="Y" value="1" width="w-[14px]" />
          <Axis of="Scale" name="Z" value="1" width="w-[14px]" />
        </div>
      </div>
    </div>
  );
}

const alignButtons = [
  { name: "Left", d: "M0 1.5h9M0 3.5h5M0 5.5h9M0 7.5h5M0 9.5h7" },
  { name: "Center", d: "M0 1.5h9M2 3.5h5M0 5.5h9M2 7.5h5M1 9.5h7", active: true },
  { name: "Right", d: "M0 1.5h9M4 3.5h5M0 5.5h9M4 7.5h5M2 9.5h7" },
];

const verticalButtons = [
  { name: "Top", d: "M0 1.5h9M0 3.5h9M0 5.5h9" },
  { name: "Middle", d: "M0 3.5h9M0 5.5h9M0 7.5h9", active: true },
  { name: "Bottom", d: "M0 5.5h9M0 7.5h9M0 9.5h9" },
];

function ButtonStrip({ buttons }: { buttons: { name: string; d: string; active?: boolean }[] }) {
  return (
    <div className="flex gap-px overflow-hidden rounded-[3px] border border-[#303030] bg-[#303030]">
      {buttons.map((b) => (
        <button key={b.name} aria-label={b.name} className={`flex h-4 w-[18px] items-center justify-center ${b.active ? "bg-[#46607c]" : "bg-[#515151]"}`}>
          <svg width="9" height="11" viewBox="0 0 9 11" stroke={b.active ? "#ffffff" : "#c4c4c4"} shapeRendering="crispEdges">
            <path d={b.d} />
          </svg>
        </button>
      ))}
    </div>
  );
}

function ObjectField({ id, value, icon }: { id: string; value: string; icon?: ReactNode }) {
  return (
    <div className="flex h-[18px] w-full items-center rounded-[3px] border border-[#212121] bg-[#2a2a2a] pl-[2px]">
      {icon}
      <input id={id} readOnly value={value} className="min-w-0 flex-1 bg-transparent text-[#d2d2d2] outline-none" />
      <button aria-label="Select object" className="flex h-4 w-[18px] items-center justify-center bg-[#373737]"><Target /></button>
    </div>
  );
}

function TextComponent() {
  return (
    <div className="pt-1 pb-[7px]">
      <div className="flex flex-col pr-1 pl-[18px]">
        <label htmlFor="text" className="h-[18px] pt-px pl-px leading-[18px]">Text</label>
        <textarea
          id="text"
          defaultValue="0.00"
          className="block h-11 resize-none rounded-[3px] border border-[#212121] border-t-[#0d0d0d] bg-[#2a2a2a] px-[2px] pt-px text-[#d2d2d2] outline-none"
        />
      </div>
      <h3 className="mt-px flex h-5 items-center pt-[2px] pl-[19px] font-semibold">Character</h3>
      <Row label="Font" indent>
        {(id) => <ObjectField id={id} value="Arial" icon={<span className="mr-px ml-px text-[8px] font-bold">Aa</span>} />}
      </Row>
      <Row label="Font Style" indent>{(id) => <Dropdown id={id} value="Bold" />}</Row>
      <Row label="Font Size" indent>{(id) => <input id={id} defaultValue="70" className={inputClass} />}</Row>
      <Row label="Line Spacing" indent>{(id) => <input id={id} defaultValue="1" className={inputClass} />}</Row>
      <Row label="Rich Text" indent>{(id) => <Check id={id} checked />}</Row>
      <h3 className="flex h-5 items-center pt-[2px] pl-[19px] font-semibold">Paragraph</h3>
      <div className="grid h-5 grid-cols-[153px_1fr] items-center pr-1 pl-[19px]">
        <span className="pt-[2px] pl-[15px]">Alignment</span>
        <div className="flex gap-3">
          <ButtonStrip buttons={alignButtons} />
          <ButtonStrip buttons={verticalButtons} />
        </div>
      </div>
      <Row label="Align By Geometry" indent>{(id) => <Check id={id} />}</Row>
      <Row label="Horizontal Overflow" indent>{(id) => <Dropdown id={id} value="Wrap" />}</Row>
      <Row label="Vertical Overflow" indent>{(id) => <Dropdown id={id} value="Truncate" />}</Row>
      <Row label="Best Fit" indent className="-mb-[2px] h-5">{(id) => <Check id={id} />}</Row>
      <Row label="Color">
        {(id) => (
          <div className="flex h-[18px] w-full rounded-[3px] border border-[#212121] bg-[#373737]">
            <button id={id} className="h-4 flex-1 border-b-[3px] border-white bg-[#f40b0b]" />
            <button aria-label="Pick color" className="flex h-4 w-[18px] items-center justify-center">
              <svg width="11" height="11" viewBox="0 0 11 11">
                <path d="M6.4 2.6L8.4 0.6C9.4-0.2 11.2 1.6 10.4 2.6L8.4 4.6L9 5.2L8 6.2L4.8 3L5.8 2z" fill="#c4c4c4" />
                <path d="M5.6 4L1.4 8.2V9.6H2.8L7 5.4" fill="none" stroke="#c4c4c4" strokeWidth="1.2" />
              </svg>
            </button>
          </div>
        )}
      </Row>
      <Row label="Material">{(id) => <ObjectField id={id} value="None (Material)" />}</Row>
      <Row label="Raycast Target">{(id) => <Check id={id} checked />}</Row>
      <div className="mb-[2px] flex h-5 items-center gap-[2px] pl-2 text-[#d2d2d2]">
        <Foldout closed />
        <span className="pt-[2px]">Raycast Padding</span>
      </div>
      <Row label="Maskable">{(id) => <Check id={id} checked />}</Row>
    </div>
  );
}

function MaterialPreview() {
  return (
    <div className="flex h-[55px] border-t border-[#1a1a1a] bg-[#3c3c3c] pr-[5px] pl-[7px]">
      <div className="flex w-[46px] items-end gap-1 pb-[7px]">
        <Foldout closed />
        <span className="mb-[13px] size-6 bg-white" />
      </div>
      <div className="flex flex-1 flex-col gap-2 pt-[5px]">
        <div className="flex items-center justify-between pr-px pl-[3px]">
          <span className="text-[13px] leading-[16px] text-[#a4a4a4]">Default UI Material (Material)</span>
          <div className="flex items-center gap-[10px]"><HelpIcon /><Dots /></div>
        </div>
        <div className="flex items-center text-[#7d7d7d]">
          <label htmlFor="shader" className="w-[52px] shrink-0">Shader</label>
          <Dropdown id="shader" value="UI/Default" disabled />
          <button disabled className="ml-1 h-[17px] w-[43px] shrink-0 rounded-[3px] bg-[#464646] text-[#8a8a8a]">Edit...</button>
        </div>
      </div>
    </div>
  );
}

function Inspector() {
  return (
    <section className="flex w-[426px] shrink-0 flex-col bg-[#383838]">
      <TabBar
        title="Inspector"
        width="w-[93px]"
        icon={
          <svg width="11" height="11" viewBox="0 0 11 11" className="shrink-0">
            <circle cx="5.5" cy="5.5" r="5" fill="#c4c4c4" />
            <path d="M4.6 2h1.8v1.6H4.6zM4.2 4.6h2.2v3.4h.8v.9H4v-.9h.7V5.4h-.5z" fill="#3c3c3c" />
          </svg>
        }
      />
      <ObjectHeader />
      <ComponentHeader
        title="Rect Transform"
        icon={
          <svg width="12" height="12" viewBox="0 0 12 12" fill="#c4c4c4">
            <path d="M4.6 0.6V4.6H0.6L2.2 3.2L0 1.6L1.6 0L3.2 2.2zM7.4 0.6V4.6h4L9.8 3.2L12 1.6L10.4 0L8.8 2.2zM4.6 11.4V7.4H0.6L2.2 8.8L0 10.4L1.6 12L3.2 9.8zM7.4 11.4V7.4h4L9.8 8.8L12 10.4L10.4 12L8.8 9.8z" />
          </svg>
        }
      />
      <RectTransform />
      <ComponentHeader
        title="Canvas Renderer"
        icon={
          <svg width="16" height="12" viewBox="0 0 16 12" fill="none" stroke="#d2d2d2" strokeWidth="1.3">
            <path d="M0.6 6C3.5-0.8 12.5-0.8 15.4 6C12.5 12.8 3.5 12.8 0.6 6z" />
            <circle cx="8" cy="6" r="2.8" />
            <circle cx="8" cy="6" r="0.6" />
          </svg>
        }
      />
      <div className="pt-[3px] pb-2">
        <Row label="Cull Transparent Mesh">{(id) => <Check id={id} checked />}</Row>
      </div>
      <ComponentHeader
        title="Text"
        toggle
        icon={<span className="size-3 rounded-[1px] bg-[#c4c4c4] text-center text-[9px] leading-3 font-bold text-[#383838]">T</span>}
      />
      <TextComponent />
      <MaterialPreview />
      <div className="h-3 shrink-0 border-y border-[#1a1a1a]" />
      <div className="flex flex-1 items-start justify-center pt-[9px]">
        <button className="h-[23px] w-[230px] rounded-[3px] border border-[#303030] bg-[#585858] text-[#eeeeee]">Add Component</button>
      </div>
      <div className="flex h-[22px] shrink-0 items-stretch border-y border-[#1a1a1a] bg-[#3c3c3c] pl-1">
        <button className="flex w-32 items-center justify-between border-l border-[#1a1a1a] pr-1 pl-[3px] font-semibold text-[#d2d2d2]">
          <span className="pt-[2px]">Default UI Material</span>
          <Caret />
        </button>
        <div className="flex flex-1 items-center border-x border-[#1a1a1a] px-[3px]">
          <span className="h-1 flex-1 border-y border-[#5e5e5e]" />
        </div>
        <button aria-label="Preview menu" className="flex w-4 items-center justify-center"><Dots /></button>
      </div>
    </section>
  );
}

/* ── Status bar ── */

function StatusBar() {
  return (
    <footer className="flex h-[22px] shrink-0 justify-end bg-[#191919]">
      <button aria-label="Debugger" className="flex w-[26px] items-center justify-center border-l border-[#262626]">
        <svg width="14" height="14" viewBox="0 0 14 14">
          <path d="M3.6 3.6a3.400 3.400 0 0 1 6.800 0zM2.800 4.400h8.400v5.200a4.200 4.200 0 0 1-8.400 0z" fill="#c4c4c4" />
          <path d="M0.5 7.5h13M1.5 2.5l2.5 2.5M12.5 2.5L10 5M1.5 13l2.5-3M12.5 13L10 10" stroke="#c4c4c4" strokeWidth="1.3" />
          <path d="M0.6 0.6L13.4 13.4" stroke="#191919" strokeWidth="1.6" />
          <path d="M0 1.4L12.6 14" stroke="#c4c4c4" />
        </svg>
      </button>
      <button aria-label="Cache server" className="flex w-[27px] items-center justify-center border-l border-[#262626]">
        <svg width="14" height="14" viewBox="0 0 14 14">
          <path d="M1 2.5C1-0.2 13-0.2 13 2.5V4C13 6 1 6 1 4zM1 6.2C3 8 11 8 13 6.2V8C12 10 2 10 1 8zM1 10C3 11.8 11 11.8 13 10v1.5C12 14 2 14 1 11.5z" fill="#c4c4c4" />
          <path d="M2 2L13.6 13.4" stroke="#191919" strokeWidth="1.6" />
          <path d="M1 2.6L12.6 14" stroke="#c4c4c4" />
        </svg>
      </button>
      <button aria-label="Auto refresh" className="flex w-[26px] items-center justify-center border-l border-[#262626]">
        <svg width="14" height="14" viewBox="0 0 14 14">
          <circle cx="7" cy="7" r="6" fill="none" stroke="#c4c4c4" strokeWidth="1.4" strokeDasharray="7 2.4" />
          <path d="M7 3a3 3 0 0 1 2 5.200V11H5V8.200A3 3 0 0 1 7 3z" fill="#c4c4c4" />
          <path d="M0.8 0.6L13.4 13.2" stroke="#191919" strokeWidth="1.8" />
          <path d="M0 1.4L12.6 14" stroke="#c4c4c4" />
        </svg>
      </button>
      <button aria-label="Progress" className="flex w-[28px] items-center border-l border-[#262626] pl-[5px]">
        <svg width="14" height="14" viewBox="0 0 14 14" fill="none" stroke="#c4c4c4" strokeWidth="1.2">
          <circle cx="7" cy="7" r="6.3" />
          <path d="M4.2 7.2L6.2 9L9.8 5.2" />
        </svg>
      </button>
    </footer>
  );
}

export default function App() {
  return (
    <div className="flex min-h-screen flex-col bg-[#0a6cb5] font-['Inter',sans-serif] text-[12px] leading-[16px] text-[#bdbdbd]">
      <div className="flex flex-1">
        <main className="flex min-w-0 flex-1 flex-col">
          <MenuBar />
          <MainToolbar />
          <div className="flex min-h-0 flex-1 gap-[2px] bg-[#191919]">
            <div className="flex min-w-0 flex-1 flex-col gap-[2px]">
              <section className="flex flex-456 basis-0 flex-col">
                <div className="flex h-[19px] shrink-0 items-center justify-between bg-[#282828] pr-[11px]">
                  <span className="flex h-full w-5 items-center border-r border-[#212121] bg-[#3c3c3c] pt-[2px] text-[#d2d2d2]">e</span>
                  <button aria-label="Scene menu"><Dots /></button>
                </div>
                <SceneToolbar />
                <div className="h-0 flex-1"><SceneCanvas /></div>
              </section>
              <section className="flex flex-431 basis-0 flex-col">
                <div className="flex h-[19px] shrink-0 items-center justify-between bg-[#282828] pr-[11px]">
                  <span className="h-full w-[17px] border-r border-[#212121] bg-[#3c3c3c]" />
                  <button aria-label="Game menu"><Dots /></button>
                </div>
                <GameToolbar />
                <div className="h-0 flex-1"><GameCanvas /></div>
              </section>
            </div>
            <Hierarchy />
            <Project />
            <Inspector />
          </div>
          <StatusBar />
        </main>
        <aside className="flex w-[6px] shrink-0 flex-col">
          <span className="flex-1 border-l-2 border-[#3a3a40] bg-[#2a2a2d]" />
          <span className="h-[15px]" />
        </aside>
      </div>
      <div className="flex h-[3px] shrink-0 justify-end gap-3 pr-[22px]">
        <span className="mr-8 w-[2px] bg-[#b9c4cc]" />
        <span className="w-1 bg-[#7fa9c9]" />
        <span className="w-[2px] bg-[#7fa9c9]" />
        <span className="w-[3px] bg-[#7fa9c9]" />
        <span className="w-[2px] bg-[#7fa9c9]" />
        <span className="mr-6 w-[2px] bg-[#7fa9c9]" />
        <span className="w-1 bg-[#b9a9a0]" />
      </div>
    </div>
  );
}
